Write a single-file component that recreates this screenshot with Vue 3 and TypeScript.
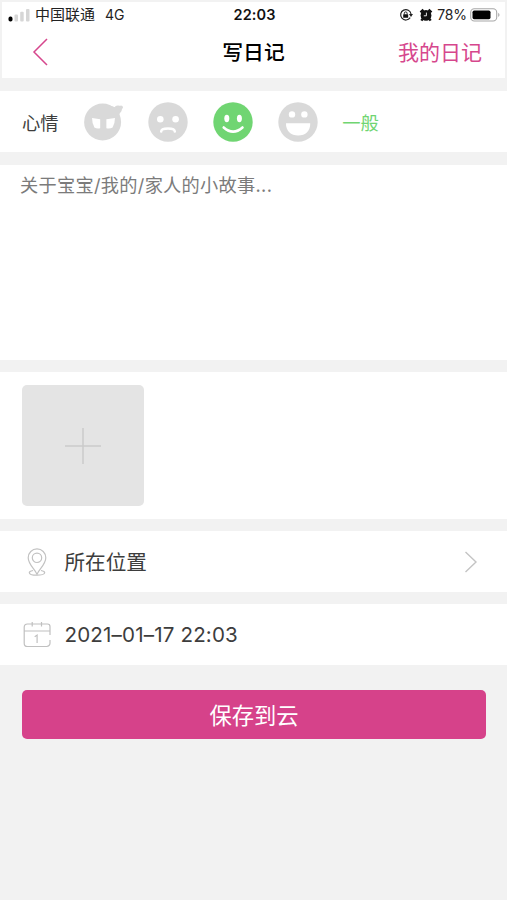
<script setup lang="ts">
import { ref } from 'vue'

type Mood = 'angry' | 'sad' | 'normal' | 'happy'

const moods: Mood[] = ['angry', 'sad', 'normal', 'happy']
const selected = ref<Mood>('normal')
const labels: Record<Mood, string> = { angry: '生气', sad: '难过', normal: '一般', happy: '开心' }
const story = ref('')
</script>

<template>
  <div class="page">
    <header class="top">
      <div class="status">
        <div class="carrier">
          <svg class="signal" width="22" height="14" viewBox="0 0 22 14">
            <rect x="0.5" y="8.6" width="4" height="5" rx="1.8" fill="#000" />
            <rect x="6.5" y="6.5" width="3.5" height="7" rx="1" fill="#d6d6d6" />
            <rect x="12.2" y="3.7" width="3.5" height="9.8" rx="1" fill="#d6d6d6" />
            <rect x="18" y="1" width="3.5" height="12.5" rx="1" fill="#d6d6d6" />
          </svg>
          <span class="operator">中国联通</span>
          <span class="network">4G</span>
        </div>
        <span class="clock">22:03</span>
        <div class="indicators">
          <svg width="14" height="14" viewBox="0 0 14 14">
            <path d="M11.2 9.7A5.2 5.2 0 1 1 12 6" fill="none" stroke="#222" stroke-width="1.2" />
            <path d="M9.9 6h4.1l-2 3z" fill="#222" />
            <rect x="4.2" y="6.2" width="5" height="3.6" rx="0.5" fill="#111" />
            <path d="M5.3 6.5V5.3a1.4 1.4 0 0 1 2.8 0v1.2" fill="none" stroke="#222" />
          </svg>
          <svg class="alarm" width="14" height="14" viewBox="0 0 14 14">
            <circle cx="7" cy="7.4" r="5.4" fill="#111" />
            <path d="M1.5 4.3 4.4 1.7M9.6 1.7l2.9 2.6M3.4 11l-1 1.7M10.6 11l1 1.7" stroke="#111" stroke-width="2.4" />
            <path d="M7.4 4.6v3.2H4.8" fill="none" stroke="#fff" stroke-width="0.9" />
          </svg>
          <span class="percent">78%</span>
          <svg class="battery" width="31" height="14" viewBox="0 0 31 14">
            <rect x="0.7" y="0.8" width="26" height="12.2" rx="3.6" fill="#fff" stroke="#a8a8a8" stroke-width="1.1" />
            <rect x="2.5" y="2.6" width="18" height="8.6" rx="1.7" fill="#000" />
            <path d="M28.2 4.7q2.6 2.2 0 4.4z" fill="#aaa" />
          </svg>
        </div>
      </div>
      <nav class="nav">
        <button class="back" aria-label="返回">
          <svg width="17" height="28" viewBox="0 0 17 28">
            <path d="M15 1 2 14 15 27" fill="none" stroke="#d6478d" stroke-width="1.5" />
          </svg>
        </button>
        <h1>写日记</h1>
        <a class="mine">我的日记</a>
      </nav>
    </header>

    <section class="panel mood">
      <span class="mood-title">心情</span>
      <div class="faces">
        <button
          v-for="m in moods"
          :key="m"
          class="face"
          :class="{ active: m === selected }"
          :aria-label="labels[m]"
          @click="selected = m"
        >
          <svg width="40" height="40" viewBox="0 0 40 40">
            <template v-if="m === 'angry'">
              <circle cx="18.6" cy="20" r="18.5" fill="currentColor" />
              <circle cx="34" cy="7.2" r="3.8" fill="currentColor" />
              <circle cx="37" cy="5.3" r="1.9" fill="currentColor" />
              <path d="M24 3 32 5.500 36.500 10 34.500 14z" fill="currentColor" />
              <path d="M8 16 16.200 17.300V26.300Q13 27.200 10.400 25.600Q8.200 22 8 16z" fill="#fff" />
              <path d="M31 16 22.400 17.300V26.300Q25.800 27.200 28.600 25.600Q30.800 22 31 16z" fill="#fff" />
            </template>
            <template v-else>
              <circle cx="20" cy="20" r="19.7" fill="currentColor" />
              <g v-if="m === 'sad'">
                <circle cx="12.3" cy="17.2" r="3.3" fill="#fff" />
                <circle cx="27.6" cy="17.2" r="3.3" fill="#fff" />
                <path d="M13.2 29.6q0-3.1 6.800-3.100t6.800 3.100" fill="none" stroke="#fff" stroke-width="2.5" stroke-linecap="round" />
              </g>
              <g v-else-if="m === 'normal'">
                <ellipse cx="13.8" cy="16.5" rx="2.5" ry="3.7" fill="#fff" />
                <ellipse cx="26.4" cy="16.5" rx="2.5" ry="3.7" fill="#fff" />
                <path d="M10.7 25.5q9.400 8.300 18.800 0" fill="none" stroke="#fff" stroke-width="2.6" stroke-linecap="round" />
              </g>
              <g v-else>
                <circle cx="14" cy="12.4" r="3.2" fill="#fff" />
                <circle cx="26.4" cy="12.4" r="3.2" fill="#fff" />
                <path d="M8 21.2h24.200c.3 7.500-4.700 12.300-12 12.300S7.700 28.700 8 21.200z" fill="#fff" />
              </g>
            </template>
          </svg>
        </button>
      </div>
      <span class="mood-value">{{ labels[selected] }}</span>
    </section>

    <section class="panel story">
      <textarea v-model="story" placeholder="关于宝宝/我的/家人的小故事..."></textarea>
    </section>

    <section class="panel photos">
      <button class="add" aria-label="添加照片">
        <svg width="38" height="38" viewBox="0 0 38 38">
          <path d="M19 1v36M1 19h36" stroke="#cacaca" stroke-width="1.5" />
        </svg>
      </button>
    </section>

    <section class="panel row">
      <svg class="row-icon" width="30" height="30" viewBox="0 0 30 30" fill="none" stroke="#c2c2c2" stroke-width="1.2">
        <path d="M15 27.200C12.500 22 6.200 17 6.200 10.700a8.800 8.800 0 0 1 17.600 0C23.800 17 17.500 22 15 27.200z" />
        <circle cx="15" cy="10.800" r="4.700" />
        <path d="M11 23.500c-2.200.4-3.700 1.200-3.700 2.200 0 1.500 3.500 2.500 7.700 2.500s7.700-1 7.700-2.500c0-1-1.500-1.800-3.700-2.200" />
      </svg>
      <span class="row-text">所在位置</span>
      <svg class="chevron" width="14" height="22" viewBox="0 0 14 22">
        <path d="M1.500 1 12 11 1.500 21" fill="none" stroke="#c4c4c4" stroke-width="1.400" />
      </svg>
    </section>

    <section class="panel row">
      <svg class="row-icon" width="30" height="30" viewBox="0 0 30 30" fill="none" stroke="#c0c0c0" stroke-width="1.2">
        <path d="M28 15V6.500a2.500 2.500 0 0 0-2.500-2.500h-20A3.300 3.300 0 0 0 2.200 7.300v15.900a3.300 3.300 0 0 0 3.300 3.300h19.200a3.300 3.300 0 0 0 3.300-3.300V20M2.200 11H28M10.200 2v4.500M19.500 2v4.500" />
        <path d="M12.700 16.800l2.400-1.700v7.800" />
      </svg>
      <span class="row-text date">2021–01–17 22:03</span>
    </section>

    <button class="save">保存到云</button>
  </div>
</template>

<style>
body {
  margin: 0;
  background: #f2f2f2;
}
</style>

<style scoped>
.page {
  box-sizing: border-box;
  min-height: 900px;
  padding-top: 2px;
  display: flex;
  flex-direction: column;
  background: #f2f2f2;
  color: #3d3d3d;
  font-family: Inter, "Noto Sans CJK SC", sans-serif;
}
button {
  border: 0;
  padding: 0;
  background: none;
  font: inherit;
  display: flex;
  align-items: center;
  justify-content: center;
}
svg {
  display: block;
  flex: none;
}
.top {
  height: 76px;
  margin: 0 2px 13px;
  background: #fff;
}
.status {
  height: 24px;
  display: grid;
  grid-template-columns: 1fr auto 1fr;
  align-items: center;
  padding: 0 4px 0 6px;
}
.carrier,
.indicators {
  display: flex;
  align-items: center;
}
.indicators {
  justify-content: flex-end;
}
.operator {
  margin-left: 5px;
  padding-top: 1px;
  font-size: 15px;
  line-height: 24px;
  color: #222;
}
.network {
  margin-left: 10px;
  font-size: 14px;
  color: #222;
}
.clock {
  font-size: 14.5px;
  font-weight: 600;
  letter-spacing: 0.1px;
  color: #111;
}
.alarm {
  margin-left: 6px;
}
.percent {
  margin: 0 3px 0 4px;
  font-size: 14px;
  letter-spacing: -0.1px;
  color: #222;
}
.nav {
  height: 52px;
  display: grid;
  grid-template-columns: 1fr auto 1fr;
  align-items: center;
  padding: 0 23px 0 30px;
}
.back {
  justify-self: start;
}
h1 {
  margin: 2px 7px 0 0;
  font-size: 20.8px;
  font-weight: 500;
  line-height: 30px;
  color: #000;
}
.mine {
  justify-self: end;
  margin-top: 2px;
  font-size: 21px;
  line-height: 30px;
  color: #d6478d;
}
.panel {
  box-sizing: border-box;
  background: #fff;
  margin-bottom: 12px;
}
.mood {
  height: 61px;
  margin-bottom: 13px;
  display: flex;
  align-items: center;
  padding-left: 22px;
  font-size: 18.3px;
}
.faces {
  display: flex;
  gap: 24.7px;
  margin: 0 24.5px 0 25px;
}
.face {
  width: 40px;
  height: 40px;
  color: #d9d9d9;
}
.face.active {
  color: #70d572;
}
.mood-value {
  color: #70d572;
}
.story {
  height: 195px;
  padding: 7px 20px;
}
textarea {
  display: block;
  width: 100%;
  height: 180px;
  padding: 0;
  border: 0;
  outline: 0;
  resize: none;
  background: none;
  font: inherit;
  font-size: 18.2px;
  letter-spacing: 0.3px;
  line-height: 27px;
  color: #3d3d3d;
}
textarea::placeholder {
  color: #7b7b7b;
}
.photos {
  height: 147px;
  padding: 13px 22px;
}
.add {
  width: 122px;
  height: 121px;
  border-radius: 5px;
  background: #e4e4e4;
}
.row {
  height: 61px;
  display: flex;
  align-items: center;
  padding: 0 29px 0 22px;
}
.row-icon {
  margin-right: 12.5px;
}
.row-text {
  flex: 1;
  padding-bottom: 2px;
  font-size: 20.6px;
}
.date {
  padding-bottom: 0;
  letter-spacing: 0.15px;
}
.save {
  box-sizing: border-box;
  height: 49px;
  margin: 13px 21px 0 22px;
  padding-bottom: 2px;
  border-radius: 5px;
  background: #d6428a;
  color: #fff;
  font-size: 22.3px;
}
</style>
